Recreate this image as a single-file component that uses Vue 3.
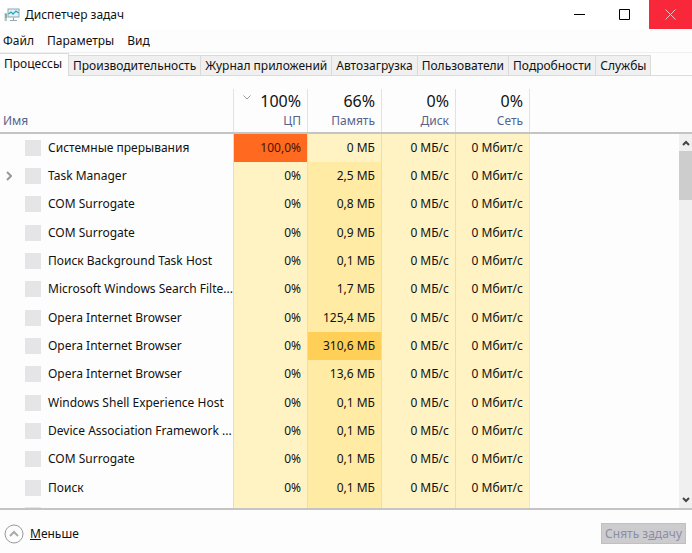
<script setup>
const menus = ['Файл', 'Параметры', 'Вид']

const tabs = [
  'Процессы',
  'Производительность',
  'Журнал приложений',
  'Автозагрузка',
  'Пользователи',
  'Подробности',
  'Службы'
]

const columns = [
  { label: 'ЦП', total: '100%', sorted: true },
  { label: 'Память', total: '66%' },
  { label: 'Диск', total: '0%' },
  { label: 'Сеть', total: '0%' }
]

const processes = [
  { name: 'Системные прерывания', cpu: '100,0%', cpuHeat: 'max', mem: '0 МБ', memHeat: 'low' },
  { name: 'Task Manager', cpu: '0%', mem: '2,5 МБ', group: true },
  { name: 'COM Surrogate', cpu: '0%', mem: '0,8 МБ' },
  { name: 'COM Surrogate', cpu: '0%', mem: '0,9 МБ' },
  { name: 'Поиск Background Task Host', cpu: '0%', mem: '0,1 МБ' },
  { name: 'Microsoft Windows Search Filte...', cpu: '0%', mem: '1,7 МБ' },
  { name: 'Opera Internet Browser', cpu: '0%', mem: '125,4 МБ' },
  { name: 'Opera Internet Browser', cpu: '0%', mem: '310,6 МБ', memHeat: 'high' },
  { name: 'Opera Internet Browser', cpu: '0%', mem: '13,6 МБ' },
  { name: 'Windows Shell Experience Host', cpu: '0%', mem: '0,1 МБ' },
  { name: 'Device Association Framework ...', cpu: '0%', mem: '0,1 МБ' },
  { name: 'COM Surrogate', cpu: '0%', mem: '0,1 МБ' },
  { name: 'Поиск', cpu: '0%', mem: '0,1 МБ' }
]
</script>

<template>
  <main class="window">
    <header class="titlebar">
      <svg class="app-icon" viewBox="0 0 16 14" aria-hidden="true">
        <rect x="4" y="1" width="11" height="8" fill="#dff4fa" stroke="#93a3a9" />
        <path d="M4.500 6L7 4L9 6L12 3L14.500 5" fill="none" stroke="#27a3c4" stroke-width="1.300" />
        <path d="M9.500 9.500V12M6 12.500H13" fill="none" stroke="#9aa6ab" stroke-width="1.200" />
        <path d="M0.500 5H3V13H0.500Z" fill="#b7c6c6" />
        <path d="M1 7H3M1 9H3" stroke="#4f9c78" />
      </svg>
      <h1>Диспетчер задач</h1>
      <button class="win-btn" type="button" aria-label="Свернуть">
        <svg viewBox="0 0 11 11"><path d="M0 5.500H11" /></svg>
      </button>
      <button class="win-btn" type="button" aria-label="Развернуть">
        <svg viewBox="0 0 11 11"><path d="M0.500 0.500H10.500V10.500H0.500Z" /></svg>
      </button>
      <button class="win-btn close" type="button" aria-label="Закрыть">
        <svg viewBox="0 0 11 11"><path d="M0.500 0.500L10.500 10.500M10.500 0.500L0.500 10.500" /></svg>
      </button>
    </header>

    <nav class="menubar">
      <button v-for="m in menus" :key="m" type="button">{{ m }}</button>
    </nav>

    <div class="tabs" role="tablist">
      <button
        v-for="(t, i) in tabs"
        :key="t"
        type="button"
        role="tab"
        :aria-selected="i === 0"
        :class="{ active: i === 0 }"
      >{{ t }}</button>
    </div>

    <section class="pane">
      <div class="list">
        <table>
          <colgroup>
            <col class="col-name" />
            <col v-for="c in columns" :key="c.label" class="col-value" />
            <col />
          </colgroup>
          <thead>
            <tr>
              <th class="name-head" scope="col">Имя</th>
              <th v-for="c in columns" :key="c.label" class="value-head" scope="col">
                <span class="total">
                  <svg v-if="c.sorted" viewBox="0 0 8 5" aria-hidden="true"><path d="M0.500 0.500L4 4L7.500 0.500" /></svg>
                  {{ c.total }}
                </span>
                <span class="label">{{ c.label }}</span>
              </th>
              <td></td>
            </tr>
          </thead>
          <tbody>
            <tr v-for="(p, i) in processes" :key="i">
              <td>
                <div class="process">
                  <span class="expander">
                    <svg v-if="p.group" viewBox="0 0 6 10" aria-hidden="true"><path d="M1 1L5 5L1 9" /></svg>
                  </span>
                  <span class="thumb"></span>
                  <span class="process-name">{{ p.name }}</span>
                </div>
              </td>
              <td class="value" :class="p.cpuHeat || 'low'">{{ p.cpu }}</td>
              <td class="value" :class="p.memHeat || 'mid'">{{ p.mem }}</td>
              <td class="value low">0 МБ/с</td>
              <td class="value low">0 Мбит/с</td>
              <td class="filler"></td>
            </tr>
            <tr class="partial">
              <td>
                <div class="process">
                  <span class="expander"></span>
                  <span class="thumb"></span>
                </div>
              </td>
              <td class="value low"></td>
              <td class="value mid"></td>
              <td class="value low"></td>
              <td class="value low"></td>
              <td class="filler"></td>
            </tr>
          </tbody>
        </table>
      </div>
      <div class="scroll-column">
        <div class="scroll-head"></div>
        <div class="scrollbar">
          <button type="button" aria-label="Вверх">
            <svg viewBox="0 0 8 6"><path d="M1 5L4 2L7 5" /></svg>
          </button>
          <div class="scroll-thumb"></div>
          <button type="button" aria-label="Вниз">
            <svg viewBox="0 0 8 6"><path d="M1 1L4 4L7 1" /></svg>
          </button>
        </div>
      </div>
    </section>

    <footer class="footer">
      <button class="fewer" type="button">
        <svg viewBox="0 0 20 20" aria-hidden="true">
          <circle cx="10" cy="10" r="9" />
          <path class="chevron" d="M6 12L10 8L14 12" />
        </svg>
        <span><u>М</u>еньше</span>
      </button>
      <button class="end-task" type="button" disabled>Снять з<u>а</u>дачу</button>
    </footer>
  </main>
</template>

<style>
body {
  margin: 0;
  background: #fff;
}
</style>

<style scoped>
.window {
  display: flex;
  flex-direction: column;
  height: 100vh;
  overflow: hidden;
  background: #fdfdfd;
  color: #111;
  font: 12px/16px "Noto Sans", "Open Sans", sans-serif;
}

button {
  margin: 0;
  padding: 0;
  border: 0;
  background: none;
  color: inherit;
  font: inherit;
}

svg {
  display: block;
  fill: none;
}

.titlebar {
  display: flex;
  align-items: center;
  height: 29px;
  flex: none;
  background: #fff;
}

.app-icon {
  width: 16px;
  height: 14px;
  margin: 0 5px 0 4px;
}

h1 {
  flex: 1;
  margin: 0;
  font: inherit;
}

.win-btn {
  display: flex;
  align-items: center;
  justify-content: center;
  width: 45px;
  height: 29px;
}

.win-btn svg {
  width: 11px;
  height: 11px;
  stroke: #000;
}

.win-btn.close {
  width: 43px;
  margin-left: 2px;
  background: #f8283a;
}

.win-btn.close svg {
  stroke: #ffc0c4;
}

.menubar {
  display: flex;
  gap: 13px;
  flex: none;
  box-sizing: border-box;
  height: 24px;
  padding: 4px 3px 0;
  align-items: flex-start;
  border-bottom: 1px solid #f0f0f0;
}

.tabs {
  display: flex;
  align-items: flex-end;
  flex: none;
  height: 23px;
  background: linear-gradient(#dcdcdc, #dcdcdc) bottom / 100% 1px no-repeat;
}

.tabs button {
  height: 21px;
  padding: 0 4px;
  border: 1px solid #dadada;
  border-left: 0;
  background: #f0f0f0;
  white-space: nowrap;
}

.tabs .active {
  height: 23px;
  padding: 0 6px 3px 4px;
  border-bottom: 0;
  background: #fdfdfd;
}

.pane {
  display: flex;
  flex: 1;
  min-height: 0;
  border-bottom: 2px solid #c4c4c4;
}

.list {
  flex: 1;
  min-width: 0;
  overflow: hidden;
}

table {
  width: 100%;
  table-layout: fixed;
  border-collapse: separate;
  border-spacing: 0;
}

.col-name {
  width: 233px;
}

.col-value {
  width: 74px;
}

td,
th {
  padding: 0;
  font-weight: normal;
}

thead th,
thead td {
  height: 58px;
  box-sizing: border-box;
  border-bottom: 2px solid #c4c4c4;
  vertical-align: bottom;
  color: #56648a;
}

.name-head {
  padding: 0 0 3px 3px;
  text-align: left;
}

.value-head {
  padding: 0 6px 3px 0;
  text-align: right;
  background: linear-gradient(#e2e2e2, #e2e2e2) left bottom / 1px 43px no-repeat;
}

thead td {
  background: linear-gradient(#e2e2e2, #e2e2e2) left bottom / 1px 43px no-repeat;
}

.total {
  display: flex;
  justify-content: flex-end;
  color: #111;
  font-size: 16px;
  line-height: 24px;
}

.total svg {
  width: 8px;
  height: 5px;
  margin: 6px auto 0 10px;
  stroke: #9a9a9a;
}

.label {
  display: block;
}

tbody tr {
  height: 28px;
}

tbody tr:nth-child(3n + 4) {
  height: 29px;
}

.process {
  display: flex;
  align-items: center;
}

.expander {
  width: 25px;
  flex: none;
}

.expander svg {
  width: 6px;
  height: 10px;
  margin-left: 6px;
  stroke: #999;
  stroke-width: 2;
}

.thumb {
  width: 16px;
  height: 16px;
  flex: none;
  margin-right: 7px;
  background: #e5e5e8;
}

.process-name {
  white-space: nowrap;
}

.value {
  padding-right: 6px;
  border-left: 1px solid #f0dfa0;
  text-align: right;
  white-space: nowrap;
}

.low {
  background: #fff3c4;
}

.mid {
  background: #ffeba3;
}

.high {
  background: #ffcf57;
}

.max {
  background: #ff6a20;
  color: #4a1500;
}

.filler {
  border-left: 1px solid #ece6cc;
}

.partial td {
  vertical-align: top;
}

.partial .process {
  padding-top: 5px;
}

.scroll-column {
  display: flex;
  flex-direction: column;
  width: 13px;
  flex: none;
}

.scroll-head {
  height: 56px;
  flex: none;
  border-bottom: 2px solid #c4c4c4;
}

.scrollbar {
  display: flex;
  flex-direction: column;
  flex: 1;
  background: #f0f0f0;
}

.scrollbar button {
  display: flex;
  align-items: center;
  justify-content: center;
  height: 17px;
}

.scrollbar button:last-child {
  margin-top: auto;
}

.scrollbar svg {
  width: 8px;
  height: 6px;
  stroke: #444;
  stroke-width: 2;
}

.scroll-thumb {
  height: 49px;
  background: #cdcdcd;
}

.footer {
  display: flex;
  align-items: center;
  justify-content: space-between;
  flex: none;
  height: 43px;
  padding: 0 6px 0 4px;
}

.fewer {
  display: flex;
  align-items: center;
  gap: 6px;
  margin-top: 4px;
}

.fewer svg {
  width: 20px;
  height: 20px;
  stroke: #999;
}

.fewer .chevron {
  stroke-width: 2;
  stroke: #aaa;
}

.end-task {
  height: 21px;
  margin-top: 4px;
  padding: 0 3px;
  border: 1px solid #bfbfc4;
  background: #cccccf;
  color: #8d8da6;
}
</style>
